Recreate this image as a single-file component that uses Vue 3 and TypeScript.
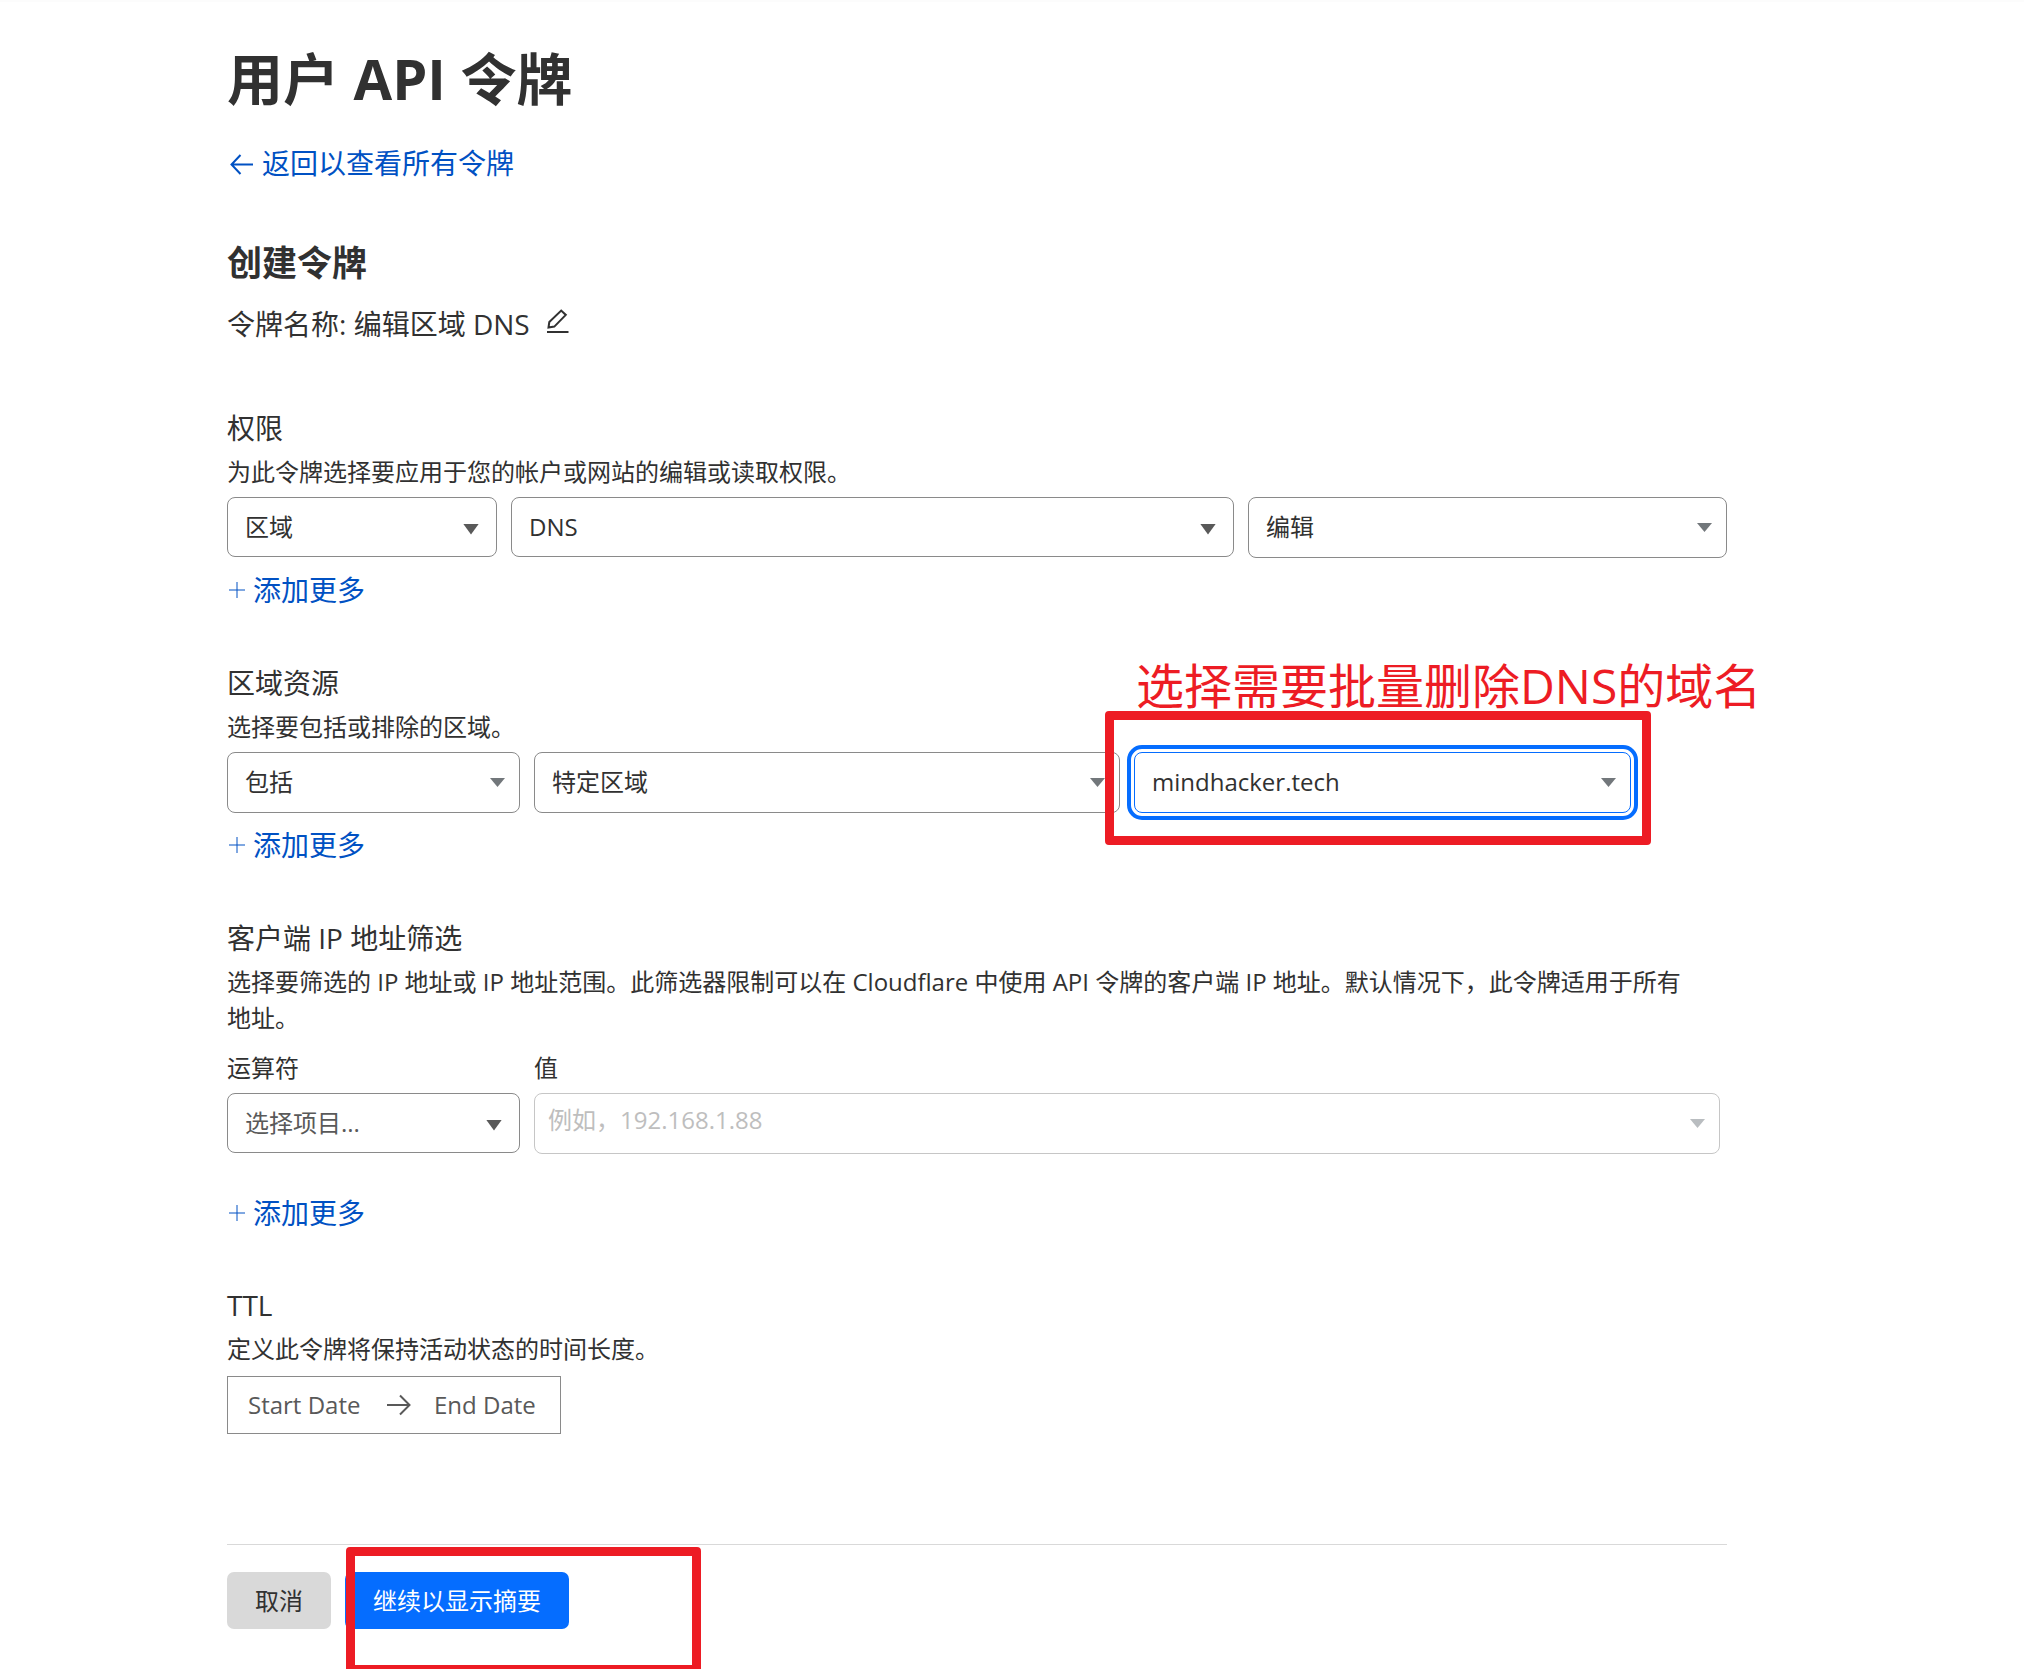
<script setup lang="ts">
import { ref } from 'vue'

const permissionScope = ref('区域')
const permissionItem = ref('DNS')
const permissionLevel = ref('编辑')
const zoneMode = ref('包括')
const zoneScope = ref('特定区域')
const zoneName = ref('mindhacker.tech')
const ipOperator = ref('')
const ipValue = ref('')
const startDate = ref('')
const endDate = ref('')
</script>

<template>
  <main class="page">
    <h1 class="page-title">用户 API 令牌</h1>
    <a class="back-link" href="#tokens">
      <svg class="arrow" viewBox="0 0 24 24" aria-hidden="true">
        <path d="M24 13.500H3M11.500 4L2.500 13.500l9 9.500" />
      </svg>
      <span>返回以查看所有令牌</span>
    </a>

    <h2 class="form-title">创建令牌</h2>
    <p class="token-name">
      <span>令牌名称: 编辑区域 DNS</span>
      <button class="edit" type="button" aria-label="编辑令牌名称">
        <svg viewBox="0 0 22 24" aria-hidden="true">
          <path d="M1.500 18.500l.8-5.500L14.200 1.600l4.600 4.300L7.300 17.600z" />
          <path d="M0 23h21.500" />
        </svg>
      </button>
    </p>

    <form @submit.prevent>
      <section class="group">
        <h3>权限</h3>
        <p class="hint">为此令牌选择要应用于您的帐户或网站的编辑或读取权限。</p>
        <div class="row permission-row">
          <div class="field native">
            <select v-model="permissionScope" aria-label="权限范围">
              <option>区域</option>
            </select>
            <span class="caret"></span>
          </div>
          <div class="field native">
            <select v-model="permissionItem" aria-label="权限项目">
              <option>DNS</option>
            </select>
            <span class="caret"></span>
          </div>
          <div class="field">
            <select v-model="permissionLevel" aria-label="权限级别">
              <option>编辑</option>
            </select>
            <span class="caret"></span>
          </div>
        </div>
        <button class="add" type="button">
          <svg viewBox="0 0 16 16" aria-hidden="true"><path d="M8 0v16M0 8h16" /></svg>
          <span>添加更多</span>
        </button>
      </section>

      <section class="group">
        <h3>区域资源</h3>
        <p class="hint">选择要包括或排除的区域。</p>
        <div class="row zone-row">
          <div class="field">
            <select v-model="zoneMode" aria-label="包括或排除">
              <option>包括</option>
            </select>
            <span class="caret"></span>
          </div>
          <div class="field">
            <select v-model="zoneScope" aria-label="区域范围">
              <option>特定区域</option>
            </select>
            <span class="caret"></span>
          </div>
          <div class="field focused">
            <select v-model="zoneName" aria-label="区域名称">
              <option>mindhacker.tech</option>
            </select>
            <span class="caret"></span>
            <span class="mark mark-zone"></span>
            <span class="mark-note">选择需要批量删除DNS的域名</span>
          </div>
        </div>
        <button class="add" type="button">
          <svg viewBox="0 0 16 16" aria-hidden="true"><path d="M8 0v16M0 8h16" /></svg>
          <span>添加更多</span>
        </button>
      </section>

      <section class="group">
        <h3>客户端 IP 地址筛选</h3>
        <p class="hint">选择要筛选的 IP 地址或 IP 地址范围。此筛选器限制可以在 Cloudflare 中使用 API 令牌的客户端 IP 地址。默认情况下，此令牌适用于所有地址。</p>
        <div class="row ip-row">
          <div class="labelled">
            <label for="ip-operator">运算符</label>
            <div class="field native muted">
              <select id="ip-operator" v-model="ipOperator">
                <option value="">选择项目...</option>
              </select>
              <span class="caret"></span>
            </div>
          </div>
          <div class="labelled">
            <label for="ip-value">值</label>
            <div class="field disabled">
              <input id="ip-value" v-model="ipValue" type="text" placeholder="例如，192.168.1.88" disabled />
              <span class="caret"></span>
            </div>
          </div>
        </div>
        <button class="add spaced" type="button">
          <svg viewBox="0 0 16 16" aria-hidden="true"><path d="M8 0v16M0 8h16" /></svg>
          <span>添加更多</span>
        </button>
      </section>

      <section class="group ttl">
        <h3>TTL</h3>
        <p class="hint">定义此令牌将保持活动状态的时间长度。</p>
        <div class="dates">
          <input v-model="startDate" type="text" placeholder="Start Date" aria-label="Start Date" />
          <svg class="arrow" viewBox="0 0 24 24" aria-hidden="true">
            <path d="M0 12h22M13 2.500L22.500 12L13 21.500" />
          </svg>
          <input v-model="endDate" type="text" placeholder="End Date" aria-label="End Date" />
        </div>
      </section>

      <footer class="actions">
        <button class="btn" type="button">取消</button>
        <div class="submit">
          <button class="btn primary" type="submit">继续以显示摘要</button>
          <span class="mark mark-submit"></span>
        </div>
      </footer>
    </form>
  </main>
</template>

<style>
body {
  margin: 0;
  background: #fff;
}
</style>

<style scoped>
.page {
  box-sizing: border-box;
  padding: 42px 297px 0 227px;
  border-top: 2px solid #fcfcfc;
  overflow: hidden;
  color: #313131;
  font: 24px/36px "Open Sans", "Noto Sans CJK SC", sans-serif;
}

h1,
h2,
h3,
p {
  margin: 0;
}

button,
input,
select {
  font: inherit;
  color: inherit;
}

button {
  padding: 0;
  border: 0;
  background: none;
  cursor: pointer;
}

svg {
  flex: none;
  fill: none;
  stroke: currentColor;
}

.page-title {
  font-size: 56px;
  line-height: 68px;
  font-weight: 700;
}

.back-link {
  display: flex;
  align-items: center;
  gap: 9px;
  margin-top: 33px;
  padding-left: 2px;
  color: #0051c3;
  font-size: 28px;
  text-decoration: none;
}

.arrow {
  width: 24px;
  height: 24px;
  stroke-width: 2;
}

.form-title {
  margin-top: 60px;
  font-size: 35px;
  line-height: 44px;
  font-weight: 700;
}

.token-name {
  display: flex;
  align-items: center;
  gap: 17px;
  margin-top: 21px;
  font-size: 28px;
}

.edit {
  display: flex;
  padding-bottom: 7px;
}

.edit svg {
  width: 22px;
  height: 24px;
  stroke-width: 2;
}

.group {
  margin-top: 57px;
}

.group:first-child {
  margin-top: 68px;
}

.group.ttl {
  margin-top: 56px;
}

h3 {
  font-size: 28px;
  line-height: 36px;
  font-weight: 400;
}

.hint {
  margin-top: 8px;
  padding-right: 32px;
}

.row {
  display: grid;
  gap: 14px;
  margin-top: 7px;
  align-items: start;
}

.permission-row {
  grid-template-columns: 270fr 723fr 479fr;
}

.zone-row {
  grid-template-columns: 293fr 586fr 497fr;
  padding-right: 96px;
}

.ip-row {
  grid-template-columns: 293fr 1186fr;
  margin-top: 14px;
  padding-right: 7px;
}

.labelled {
  display: grid;
  gap: 7px;
}

.field {
  position: relative;
  display: grid;
  align-items: center;
}

.field > select,
.field > input {
  grid-area: 1 / 1;
  box-sizing: border-box;
  width: 100%;
  height: 61px;
  padding: 0 48px 2px 17px;
  border: 1px solid #8a8a8a;
  border-radius: 8px;
  outline: 0;
  background: #fff;
  appearance: none;
}

.field.native > select {
  height: 60px;
  padding-bottom: 0;
}

.caret {
  grid-area: 1 / 1;
  justify-self: end;
  width: 15px;
  height: 9px;
  margin-right: 15px;
  background: #72777b;
  clip-path: polygon(0 0, 100% 0, 50% 100%);
  pointer-events: none;
}

.native .caret {
  width: 16px;
  height: 11px;
  margin: 4px 18px 0 0;
  background: #595959;
}

.muted > select {
  color: #595959;
}

.focused > select {
  border-color: #056dff;
  outline: 4px solid #056dff;
  outline-offset: 3px;
}

.disabled > input {
  padding: 0 48px 8px 13px;
  border-color: #c6c6c6;
}

.disabled > input::placeholder {
  color: #bebebe;
}

.disabled .caret {
  background: #b9bdc0;
}

.add {
  display: flex;
  align-items: center;
  gap: 8px;
  margin-top: 14px;
  padding-left: 2px;
  color: #0051c3;
  font-size: 28px;
  line-height: 36px;
}

.add.spaced {
  margin-top: 41px;
}

.add svg {
  width: 16px;
  height: 16px;
  stroke-width: 1;
}

.dates {
  display: inline-flex;
  align-items: center;
  gap: 23px;
  box-sizing: border-box;
  width: 334px;
  height: 58px;
  margin-top: 9px;
  padding: 0 20px;
  border: 1px solid #8a8a8a;
  color: #595959;
}

.dates input {
  flex: none;
  width: 116px;
  padding: 0;
  border: 0;
  outline: 0;
  background: none;
}

.dates input:last-child {
  width: 106px;
}

.dates input::placeholder {
  color: #595959;
  opacity: 1;
}

.actions {
  display: flex;
  gap: 14px;
  margin-top: 110px;
  padding: 27px 0 40px;
  border-top: 1px solid #d9d9d9;
}

.submit {
  position: relative;
}

.btn {
  height: 57px;
  padding: 0 28px;
  border-radius: 7px;
  background: #d9d9d9;
}

.primary {
  background: #056dff;
  color: #fff;
}

.mark {
  position: absolute;
  border: 9px solid #ed1c24;
  border-radius: 4px;
  pointer-events: none;
}

.mark-zone {
  inset: -41px -20px -32px -29px;
}

.mark-submit {
  top: -25px;
  left: 1px;
  width: 337px;
  height: 109px;
}

.mark-note {
  position: absolute;
  top: -96px;
  left: 2px;
  color: #ed1c24;
  font-size: 48px;
  line-height: 60px;
  white-space: nowrap;
  pointer-events: none;
}
</style>
